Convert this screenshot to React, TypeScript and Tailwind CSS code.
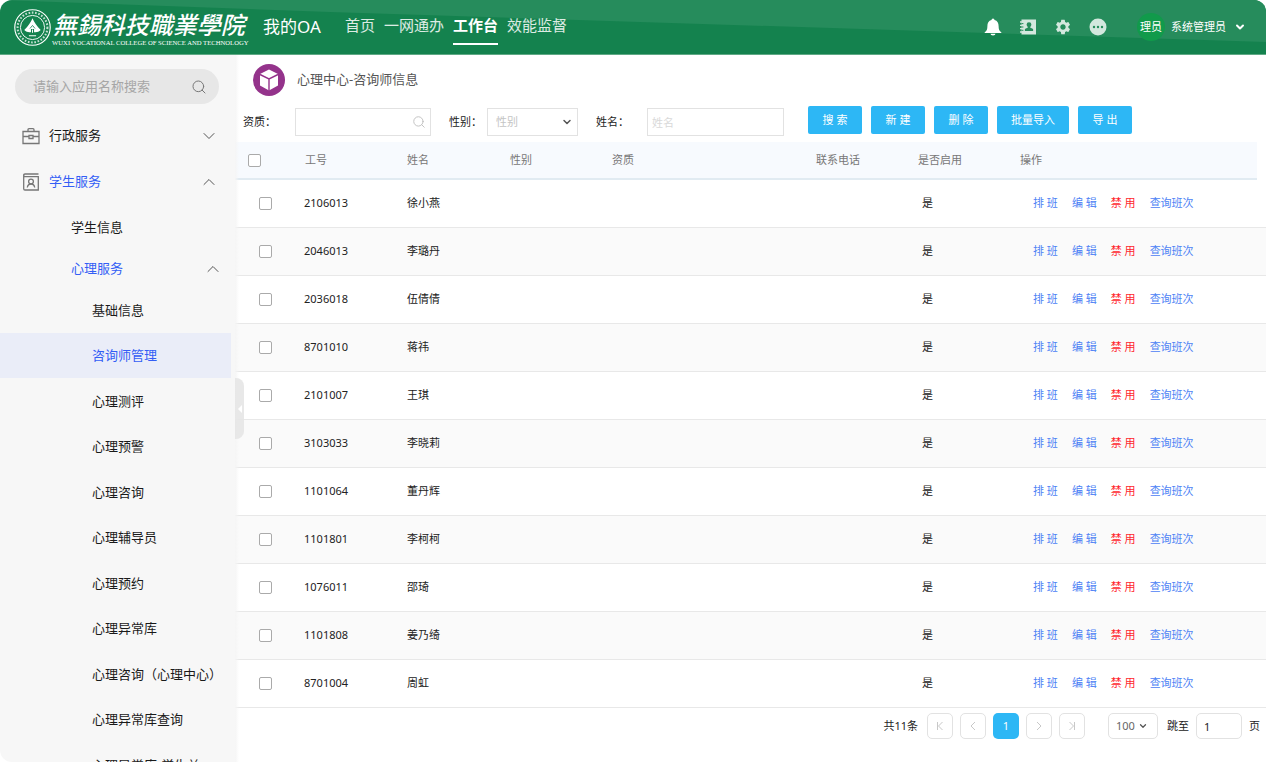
import React from "react";
import { MdSettings } from "react-icons/md";
import { Search, ChevronDown, ChevronUp } from "lucide-react";

const counselors = [
  ["2106013", "徐小燕"],
  ["2046013", "李璐丹"],
  ["2036018", "伍倩倩"],
  ["8701010", "蒋祎"],
  ["2101007", "王琪"],
  ["3103033", "李晓莉"],
  ["1101064", "董丹辉"],
  ["1101801", "李柯柯"],
  ["1076011", "邵琦"],
  ["1101808", "姜乃绮"],
  ["8701004", "周虹"],
];

const services = [
  "基础信息",
  "咨询师管理",
  "心理测评",
  "心理预警",
  "心理咨询",
  "心理辅导员",
  "心理预约",
  "心理异常库",
  "心理咨询（心理中心）",
  "心理异常库查询",
  "心理异常库-学生关",
];

const navItems = ["首页", "一网通办", "工作台", "效能监督"];

function Emblem() {
  return (
    <svg viewBox="0 0 72 72" className="size-[37px] shrink-0" fill="none" stroke="#fff" aria-hidden="true">
      <circle cx="36" cy="36" r="34.5" strokeWidth="2.2" />
      <circle cx="36" cy="36" r="29" strokeWidth="4" strokeDasharray="3.2 3.2" opacity="0.75" />
      <circle cx="36" cy="36" r="23.500" strokeWidth="1.800" />
      <path d="M36 18C33 26 27 34 20 41c4 4 9 5 13 4v-6h6v6c4 1 9 0 13-4C45 34 39 26 36 18z" fill="#fff" stroke="none" />
      <path d="M31 38l5-6 5 6" stroke="#14824e" strokeWidth="1.500" />
      <path d="M36 40v6" strokeWidth="2" />
      <path d="M29 52h14" strokeWidth="2" />
    </svg>
  );
}

function Wordmark() {
  return (
    <svg viewBox="0 0 591 114" className="h-[38px] w-[197px] shrink-0 overflow-visible" fill="#fff">
      <text x="2" y="77" fontFamily="'Noto Sans CJK TC', sans-serif" fontSize="72" fontStyle="italic" fontWeight="500">
        無錫科技職業學院
      </text>
      <text y="110" x="0" fontFamily="'Liberation Serif', serif" fontSize="20">
        WUXI VOCATIONAL COLLEGE OF SCIENCE AND TECHNOLOGY
      </text>
    </svg>
  );
}

function Header() {
  return (
    <header className="relative flex h-[55px] shrink-0 items-center border-b border-[#5fa985] bg-[#14824e] pl-[14px] pr-5 text-white">
      <svg className="absolute inset-0 h-full w-full" viewBox="0 0 1266 54" preserveAspectRatio="none" aria-hidden="true">
        <path d="M0 0H1266V42L330 12Z" fill="#268c5c" />
      </svg>
      <div className="relative flex items-center">
        <Emblem />
        <div className="ml-px">
          <Wordmark />
        </div>
        <span className="ml-[14px] w-[70px] whitespace-nowrap text-[17px]">我的OA</span>
      </div>
      <nav className="relative ml-3 flex h-full items-start gap-[9px] pt-[13px]">
        {navItems.map((item) => (
          <a
            key={item}
            href="#"
            className={
              item === "工作台"
                ? "h-8 whitespace-nowrap border-b-2 border-white text-[15px]/6 font-bold"
                : "h-8 whitespace-nowrap text-[15px]/6 text-white/85"
            }
          >
            {item}
          </a>
        ))}
      </nav>
      <div className="relative ml-auto flex items-center">
        <div className="flex items-center gap-[17px]">
          <button aria-label="通知">
            <svg viewBox="0 0 18 18" className="size-[18px]" fill="#fff" aria-hidden="true">
              <path d="M9 .5a1.500 1.500 0 0 1 1.500 1.500C13.500 2.800 14.600 5 14.600 8c0 3.500.8 4.800 2.700 6.200V15H.7v-.8C2.600 12.800 3.400 11.500 3.400 8c0-3 1.100-5.200 4.100-6A1.500 1.500 0 0 1 9 .5zM6.500 15.800h5a2.500 1.800 0 0 1-5 0z" />
            </svg>
          </button>
          <button aria-label="通讯录">
            <svg viewBox="0 0 18 18" className="size-[18px]" aria-hidden="true">
              <path d="M2.500 1.500H17V16.500H2.500z" fill="#d3e8de" />
              <path d="M1 4h3M1 7.300h3M1 10.700h3M1 14h3" stroke="#d3e8de" strokeWidth="1.300" />
              <path d="M2.600 5.600h1.800M2.600 9h1.800M2.600 12.300h1.800" stroke="#268c5c" />
              <circle cx="10" cy="6.700" r="2.400" fill="#268c5c" />
              <path d="M8.900 8h2.200v1.500l3 1.500v2H5.900v-2l3-1.500z" fill="#268c5c" />
            </svg>
          </button>
          <button aria-label="设置">
            <MdSettings className="size-[18px] text-[#d3e8de]" />
          </button>
          <button aria-label="更多">
            <svg viewBox="0 0 18 18" className="size-[18px]" aria-hidden="true">
              <circle cx="9" cy="9" r="8.500" fill="#d3e8de" />
              <g fill="#268c5c">
                <circle cx="5" cy="9" r="1.200" />
                <circle cx="9" cy="9" r="1.200" />
                <circle cx="13" cy="9" r="1.200" />
              </g>
            </svg>
          </button>
        </div>
        <span className="ml-[30px] flex size-7 items-center justify-center whitespace-nowrap rounded-full bg-[#119a4b] text-[11px]">理员</span>
        <button className="ml-1.5 flex items-center gap-2 whitespace-nowrap text-[11px]">
          系统管理员
          <ChevronDown className="size-3" strokeWidth={4} />
        </button>
      </div>
    </header>
  );
}

function Sidebar() {
  return (
    <aside className="w-[235px] shrink-0 overflow-hidden bg-[#f7f7f7] pt-[14px] text-[13px] text-[#1a1a1a]">
      <label className="ml-[15px] mr-4 flex h-[35px] items-center rounded-full bg-[#e7e7e7] pl-[18px] pr-3">
        <input
          aria-label="搜索应用"
          placeholder="请输入应用名称搜索"
          className="min-w-0 flex-1 bg-transparent outline-none placeholder:text-[#a6a6a6]"
        />
        <Search className="size-4 text-[#777]" strokeWidth={1.5} />
      </label>
      <nav className="mt-[9px]">
        <a href="#" className="flex h-[46px] items-center pl-[22px] pr-4">
          <svg viewBox="0 0 18 18" className="size-[18px]" fill="none" stroke="#777" strokeWidth="1.300" aria-hidden="true">
            <path d="M1 4.500h16v12H1zM1 9.500h6M11 9.500h6M7 8.500h4v3H7zM6 4.500V2.800Q6 1.700 7 1.700h4Q12 1.700 12 2.800v1.700" />
          </svg>
          <span className="ml-[9px] flex-1">行政服务</span>
          <ChevronDown className="size-5 text-[#555]" strokeWidth={1.2} />
        </a>
        <a href="#" className="flex h-[46px] items-center pl-[22px] pr-4 text-[#335ef5]">
          <svg viewBox="0 0 18 18" className="size-[18px]" fill="none" stroke="#777" strokeWidth="1.300" aria-hidden="true">
            <path d="M16.500 1H3Q1.700 1 1.700 2.300V15.700Q1.700 17 3 17H16.300V3.600H3Q1.700 3.600 1.700 2.300" />
            <circle cx="9" cy="8.500" r="2.400" />
            <path d="M5.300 14.500Q5.800 11 9 11T12.700 14.500" />
          </svg>
          <span className="ml-[9px] flex-1">学生服务</span>
          <ChevronUp className="size-5 text-[#555]" strokeWidth={1.2} />
        </a>
        <a href="#" className="flex h-[45px] items-center pl-[71px]">学生信息</a>
        <a href="#" className="flex h-[37px] items-center pl-[71px] pr-3 text-[#335ef5]">
          <span className="flex-1">心理服务</span>
          <ChevronUp className="size-5 text-[#555]" strokeWidth={1.2} />
        </a>
        <ul className="mr-1">
          {services.map((item) => (
            <li key={item} className="odd:h-[46px] even:h-[45px]">
              <a
                href="#"
                className={
                  item === "咨询师管理"
                    ? "flex h-full items-center whitespace-nowrap bg-[#eaedf8] pl-[92px] pt-px text-[#335ef5]"
                    : "flex h-full items-center whitespace-nowrap pl-[92px] pt-px"
                }
              >
                {item}
              </a>
            </li>
          ))}
        </ul>
      </nav>
    </aside>
  );
}

function ActionButton({ label, wide = false }: { label: string; wide?: boolean }) {
  return (
    <button
      className={
        wide
          ? "h-7 w-[72px] rounded-xs bg-[#2db7f5] text-[11px] whitespace-nowrap text-white"
          : "h-7 w-[54px] rounded-xs bg-[#2db7f5] text-[11px] whitespace-nowrap text-white"
      }
    >
      {label}
    </button>
  );
}

function Filters() {
  return (
    <form className="mt-0.5 flex h-9 items-start pl-2" onSubmit={(e) => e.preventDefault()}>
      <div className="flex h-[30px] items-center pt-0.5">
        <label htmlFor="quality" className="w-[52px]">资质：</label>
        <div className="flex h-7 w-[136px] items-center border border-[#e2e2e2] pr-1">
          <input id="quality" className="min-w-0 flex-1 px-1 outline-none" />
          <Search className="size-[14px] text-[#bbb]" strokeWidth={1.5} />
        </div>
        <label htmlFor="gender" className="ml-[18px] w-[38px] whitespace-nowrap">性别：</label>
        <div className="relative">
          <select id="gender" className="h-7 w-[91px] appearance-none border border-[#e2e2e2] bg-white pl-2 text-[#c4c4c4] outline-none">
            <option>性别</option>
          </select>
          <ChevronDown className="pointer-events-none absolute right-[5px] top-2 size-3 text-[#555]" strokeWidth={3} />
        </div>
        <label htmlFor="name" className="ml-[18px] w-[51px]">姓名：</label>
        <input id="name" placeholder="姓名" className="h-7 w-[137px] border border-[#e2e2e2] px-1 outline-none placeholder:text-[#d9d9d9]" />
      </div>
      <div className="ml-6 flex gap-[9px]">
        <ActionButton label="搜 索" />
        <ActionButton label="新 建" />
        <ActionButton label="删 除" />
        <ActionButton label="批量导入" wide />
        <ActionButton label="导 出" />
      </div>
    </form>
  );
}

const headCell = "border-b-2 border-[#e1ebf2] bg-[#f7fafe] px-[10px] text-left font-normal text-[#777]";
const checkbox = "block size-[13px] appearance-none rounded-xs border border-[#aaa] bg-white";

function CounselorTable() {
  return (
    <table className="w-full table-fixed border-separate border-spacing-0">
      <colgroup>
        <col className="w-[60px]" />
        <col className="w-[102px]" />
        <col className="w-[103px]" />
        <col className="w-[102px]" />
        <col className="w-[204px]" />
        <col className="w-[102px]" />
        <col className="w-[102px]" />
        <col />
        <col className="w-[9px]" />
      </colgroup>
      <thead>
        <tr className="h-[38px]">
          <th className="border-b-2 border-[#e1ebf2] bg-[#f7fafe] pl-[13px]">
            <input type="checkbox" aria-label="全选" className={checkbox} />
          </th>
          <th className={headCell}>工号</th>
          <th className={headCell}>姓名</th>
          <th className={headCell}>性别</th>
          <th className={headCell}>资质</th>
          <th className={headCell}>联系电话</th>
          <th className={headCell}>是否启用</th>
          <th className={headCell}>操作</th>
          <td />
        </tr>
      </thead>
      <tbody>
        {counselors.map(([id, name]) => (
          <tr key={id} className="h-12 even:bg-[#fafafa] [&>td]:border-b [&>td]:border-[#e8e8e8]">
            <td className="pl-6">
              <input type="checkbox" aria-label={"选择 " + name} className={checkbox} />
            </td>
            <td className="pl-[9px]">{id}</td>
            <td className="pl-[10px]">{name}</td>
            <td />
            <td />
            <td />
            <td className="pl-[14px]">是</td>
            <td className="pl-[23px]">
              <div className="flex gap-[14px] whitespace-nowrap text-[#4d82f5]">
                <a href="#">排 班</a>
                <a href="#">编 辑</a>
                <a href="#" className="text-[#ff1f2d]">禁 用</a>
                <a href="#">查询班次</a>
              </div>
            </td>
            <td />
          </tr>
        ))}
      </tbody>
    </table>
  );
}

function PageButton({ label, path }: { label: string; path: string }) {
  return (
    <button
      aria-label={label}
      className="flex size-[26px] items-center justify-center rounded-[5px] border border-[#e2e2e2] text-[#c8c8c8]"
    >
      <svg viewBox="0 0 10 10" className="size-[10px]" fill="none" stroke="currentColor" aria-hidden="true">
        <path d={path} />
      </svg>
    </button>
  );
}

function Pagination() {
  return (
    <div className="flex items-center justify-end gap-[7px] pr-[6px] pt-[5px]">
      <span className="mr-[2px]">共11条</span>
      <PageButton label="首页" path="M2.500 1v8M7.500 1 3.500 5l4 4" />
      <PageButton label="上一页" path="M7 1 3 5l4 4" />
      <button className="flex size-[26px] items-center justify-center rounded-[5px] bg-[#2db7f5] text-white">1</button>
      <PageButton label="下一页" path="M3 1l4 4-4 4" />
      <PageButton label="末页" path="M7.500 1v8M2.500 1l4 4-4 4" />
      <div className="relative ml-4">
        <select aria-label="每页条数" className="h-[26px] w-[50px] appearance-none rounded-[5px] border border-[#e2e2e2] bg-white pl-[7px] text-[#666] outline-none">
          <option>100</option>
        </select>
        <ChevronDown className="pointer-events-none absolute right-[10px] top-2 size-[10px] text-[#555]" strokeWidth={3} />
      </div>
      <label htmlFor="page" className="ml-[2px]">跳至</label>
      <input id="page" defaultValue="1" className="h-[26px] w-[46px] rounded-[5px] border border-[#e2e2e2] px-[7px] outline-none" />
      <span>页</span>
    </div>
  );
}

export default function App() {
  return (
    <div className="flex h-screen flex-col overflow-hidden rounded-xl bg-white font-['Noto_Sans','Noto_Sans_CJK_SC',sans-serif]">
      <Header />
      <div className="flex min-h-0 flex-1">
        <Sidebar />
        <main className="relative min-w-0 flex-1 text-[11px] text-[#222]">
          <div className="absolute inset-y-0 left-0 w-1 bg-gradient-to-r from-[#f5f5f5] to-transparent" />
          <div className="flex h-[49px] items-center gap-3 pl-[18px]">
            <svg viewBox="0 0 32 32" className="size-8" aria-hidden="true">
              <circle cx="16" cy="16" r="16" fill="#94338b" />
              <path d="M16 5.500 25 10v11.500L16 26.500 7 21.500V10z" fill="#fff" />
              <path d="M7 10.500 16 15l9-4.500M16 15v12" stroke="#94338b" strokeWidth="1.400" fill="none" />
            </svg>
            <h1 className="text-[13px] text-[#555]">心理中心-咨询师信息</h1>
          </div>
          <Filters />
          <CounselorTable />
          <Pagination />
          <button
            aria-label="收起侧栏"
            className="absolute left-0 top-[323px] flex h-[61px] w-[9px] items-center justify-center rounded-r-lg bg-[#e5e5e5]/90"
          >
            <svg viewBox="0 0 4 8" className="h-2 w-1" fill="#fff" aria-hidden="true">
              <path d="M4 0v8L0 4z" />
            </svg>
          </button>
        </main>
      </div>
    </div>
  );
}
